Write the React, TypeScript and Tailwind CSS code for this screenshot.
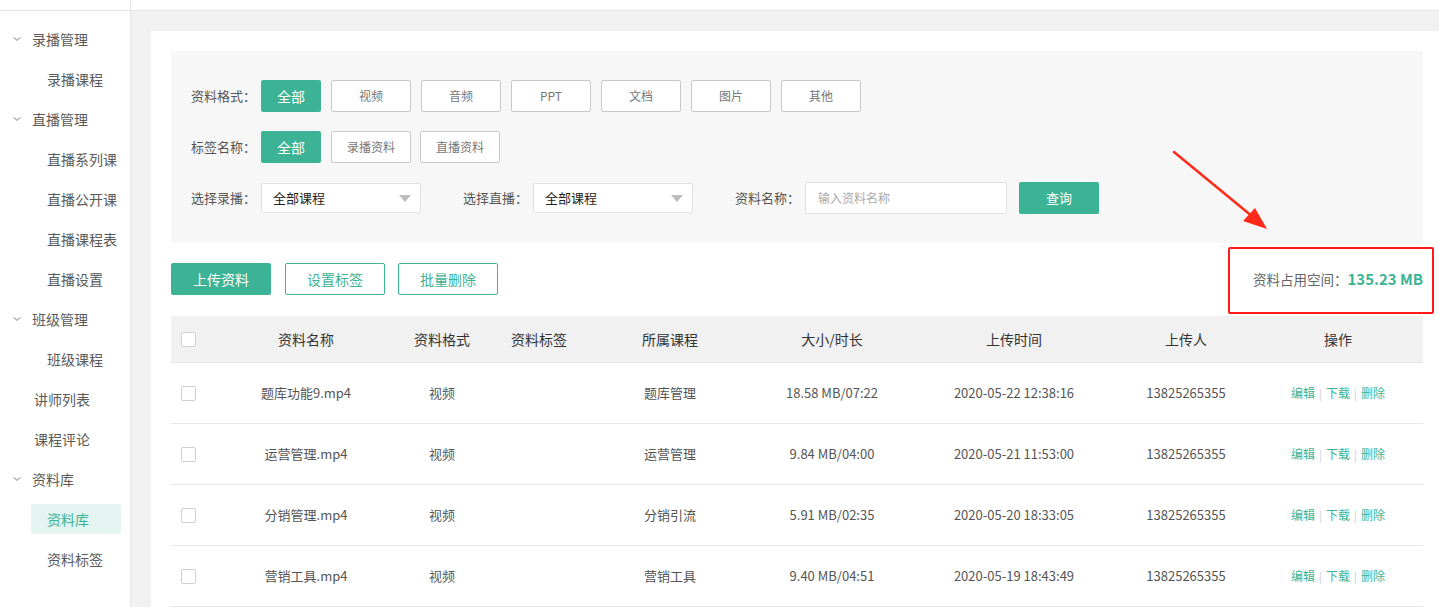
import { ChevronDown } from 'lucide-react';

const font = { fontFamily: '"Noto Sans CJK SC", "Microsoft YaHei", "Noto Sans", sans-serif' };

const nav: { label: string; level: 'group' | 'sub' | 'top'; active?: boolean }[] = [
  { label: '录播管理', level: 'group' },
  { label: '录播课程', level: 'sub' },
  { label: '直播管理', level: 'group' },
  { label: '直播系列课', level: 'sub' },
  { label: '直播公开课', level: 'sub' },
  { label: '直播课程表', level: 'sub' },
  { label: '直播设置', level: 'sub' },
  { label: '班级管理', level: 'group' },
  { label: '班级课程', level: 'sub' },
  { label: '讲师列表', level: 'top' },
  { label: '课程评论', level: 'top' },
  { label: '资料库', level: 'group' },
  { label: '资料库', level: 'sub', active: true },
  { label: '资料标签', level: 'sub' },
];

const rows = [
  { name: '题库功能9.mp4', course: '题库管理', size: '18.58 MB/07:22', time: '2020-05-22 12:38:16' },
  { name: '运营管理.mp4', course: '运营管理', size: '9.84 MB/04:00', time: '2020-05-21 11:53:00' },
  { name: '分销管理.mp4', course: '分销引流', size: '5.91 MB/02:35', time: '2020-05-20 18:33:05' },
  { name: '营销工具.mp4', course: '营销工具', size: '9.40 MB/04:51', time: '2020-05-19 18:43:49' },
];

const cols = 'grid grid-cols-[67px_136px_136px_58px_204px_120px_244px_100px_187px]';

function FilterBtn({ label, active }: { label: string; active?: boolean }) {
  return active ? (
    <button className="w-[60px] h-[32px] rounded-[2px] bg-[#3cb395] text-white text-[14px]">{label}</button>
  ) : (
    <button className="w-[80px] h-[32px] rounded-[2px] bg-white border border-[#c9c9c9] text-[#777] text-[12px]">{label}</button>
  );
}

function Select() {
  return (
    <div className="w-[160px] h-[30px] bg-white border border-[#e2e2e2] rounded-[2px] flex items-center justify-between pl-[11px] pr-[9px]">
      <span className="text-[13px] text-[#222]">全部课程</span>
      <span className="w-0 h-0 border-l-[6px] border-r-[6px] border-t-[7px] border-l-transparent border-r-transparent border-t-[#bdbdbd]" />
    </div>
  );
}

function Check() {
  return <span className="block w-[15px] h-[15px] border border-[#d0d0d0] rounded-[2px] bg-white" />;
}

export default function App() {
  return (
    <div className="flex h-[607px] overflow-hidden bg-white" style={font}>
      {/* Sidebar */}
      <div className="w-[131px] shrink-0 border-r border-[#e4e4e4] flex flex-col">
        <div className="h-[11px] border-b border-[#e4e4e4]" />
        <div className="pt-[8px]">
          {nav.map((n, i) => (
            <div key={i} className="h-[40px] flex items-center text-[14px] text-[#5a5a5a]">
              {n.level === 'group' && (
                <>
                  <ChevronDown className="w-[12px] h-[12px] ml-[11px] mr-[9px] text-[#777]" strokeWidth={2} />
                  <span>{n.label}</span>
                </>
              )}
              {n.level === 'top' && <span className="ml-[34px]">{n.label}</span>}
              {n.level === 'sub' &&
                (n.active ? (
                  <span className="ml-[31px] w-[90px] h-[30px] rounded-[2px] bg-[#e3f4f1] text-[#3cb395] flex items-center pl-[16px]">
                    {n.label}
                  </span>
                ) : (
                  <span className="ml-[47px]">{n.label}</span>
                ))}
            </div>
          ))}
        </div>
      </div>

      {/* Main */}
      <div className="flex-1 flex flex-col min-w-0">
        <div className="h-[11px] border-b border-[#e4e4e4] bg-white shrink-0" />
        <div className="flex-1 bg-[#f1f1f1] pl-[20px] pt-[20px]">
          <div className="relative bg-white pl-[20px] pr-[16px] pt-[20px] h-full">
            {/* Filter panel */}
            <div className="bg-[#f7f7f7] px-[20px] pt-[29px] pb-[29px] flex flex-col gap-[19px] text-[13px] text-[#555]">
              <div className="flex items-center">
                <span className="w-[70px]">资料格式：</span>
                <div className="flex gap-[10px]">
                  <FilterBtn label="全部" active />
                  {['视频', '音频', 'PPT', '文档', '图片', '其他'].map(t => (
                    <FilterBtn key={t} label={t} />
                  ))}
                </div>
              </div>
              <div className="flex items-center">
                <span className="w-[70px]">标签名称：</span>
                <div className="flex">
                  <FilterBtn label="全部" active />
                  <span className="ml-[10px]"><FilterBtn label="录播资料" /></span>
                  <span className="ml-[9px]"><FilterBtn label="直播资料" /></span>
                </div>
              </div>
              <div className="flex items-center h-[32px]">
                <span className="w-[70px]">选择录播：</span>
                <Select />
                <span className="w-[70px] ml-[42px]">选择直播：</span>
                <Select />
                <span className="w-[70px] ml-[42px]">资料名称：</span>
                <div className="w-[202px] h-[32px] bg-white border border-[#e0e0e0] rounded-[2px] flex items-center pl-[12px] text-[12px] text-[#aaa]">
                  输入资料名称
                </div>
                <button className="ml-[12px] w-[80px] h-[32px] rounded-[2px] bg-[#3cb395] text-white text-[13px]">查询</button>
              </div>
            </div>

            {/* Actions */}
            <div className="mt-[20px] flex items-center justify-between h-[32px]">
              <div className="flex">
                <button className="w-[100px] h-[32px] rounded-[2px] bg-[#3cb395] text-white text-[14px]">上传资料</button>
                <button className="ml-[14px] w-[100px] h-[32px] rounded-[2px] bg-white border border-[#3cb395] text-[#3cb395] text-[14px]">设置标签</button>
                <button className="ml-[13px] w-[100px] h-[32px] rounded-[2px] bg-white border border-[#3cb395] text-[#3cb395] text-[14px]">批量删除</button>
              </div>
              <div className="flex items-center text-[13.5px] text-[#666]">
                资料占用空间：<span className="font-bold text-[15px] text-[#3cb395]">135.23 MB</span>
              </div>
            </div>

            {/* Table */}
            <div className="mt-[21px] text-[13px] text-[#555]">
              <div className={`${cols} h-[47px] items-center bg-[#f1f1f1] border-b border-[#e6e6e6] text-[14px] text-[#333] text-center`}>
                <div className="pl-[10px]"><Check /></div>
                <div>资料名称</div>
                <div>资料格式</div>
                <div>资料标签</div>
                <div>所属课程</div>
                <div>大小/时长</div>
                <div>上传时间</div>
                <div>上传人</div>
                <div className="pl-[17px]">操作</div>
              </div>
              {rows.map(r => (
                <div key={r.name} className={`${cols} h-[61px] items-center border-b border-[#e6e6e6] text-center`}>
                  <div className="pl-[10px]"><Check /></div>
                  <div>{r.name}</div>
                  <div>视频</div>
                  <div></div>
                  <div>{r.course}</div>
                  <div>{r.size}</div>
                  <div>{r.time}</div>
                  <div>13825265355</div>
                  <div className="pl-[17px] text-[12px] text-[#3cb395] flex justify-center items-center gap-[4px]">
                    <span>编辑</span><span className="text-[#ccc] text-[11px]">|</span>
                    <span>下载</span><span className="text-[#ccc] text-[11px]">|</span>
                    <span>删除</span>
                  </div>
                </div>
              ))}
            </div>

            {/* Annotation overlay */}
            <div className="absolute left-[1077px] top-[216px] w-[206px] h-[67px] border-2 border-[#ff1a1a] rounded-[2px] pointer-events-none" />
            <svg className="absolute left-[1020px] top-[118px] pointer-events-none" width="100" height="90" viewBox="0 0 100 90">
              <line x1="3" y1="3" x2="82" y2="68" stroke="#ff2a1a" strokeWidth="2.5" strokeLinecap="round" />
              <polygon points="96,80 72,72 84,59" fill="#ff2a1a" />
            </svg>
          </div>
        </div>
      </div>
    </div>
  );
}
